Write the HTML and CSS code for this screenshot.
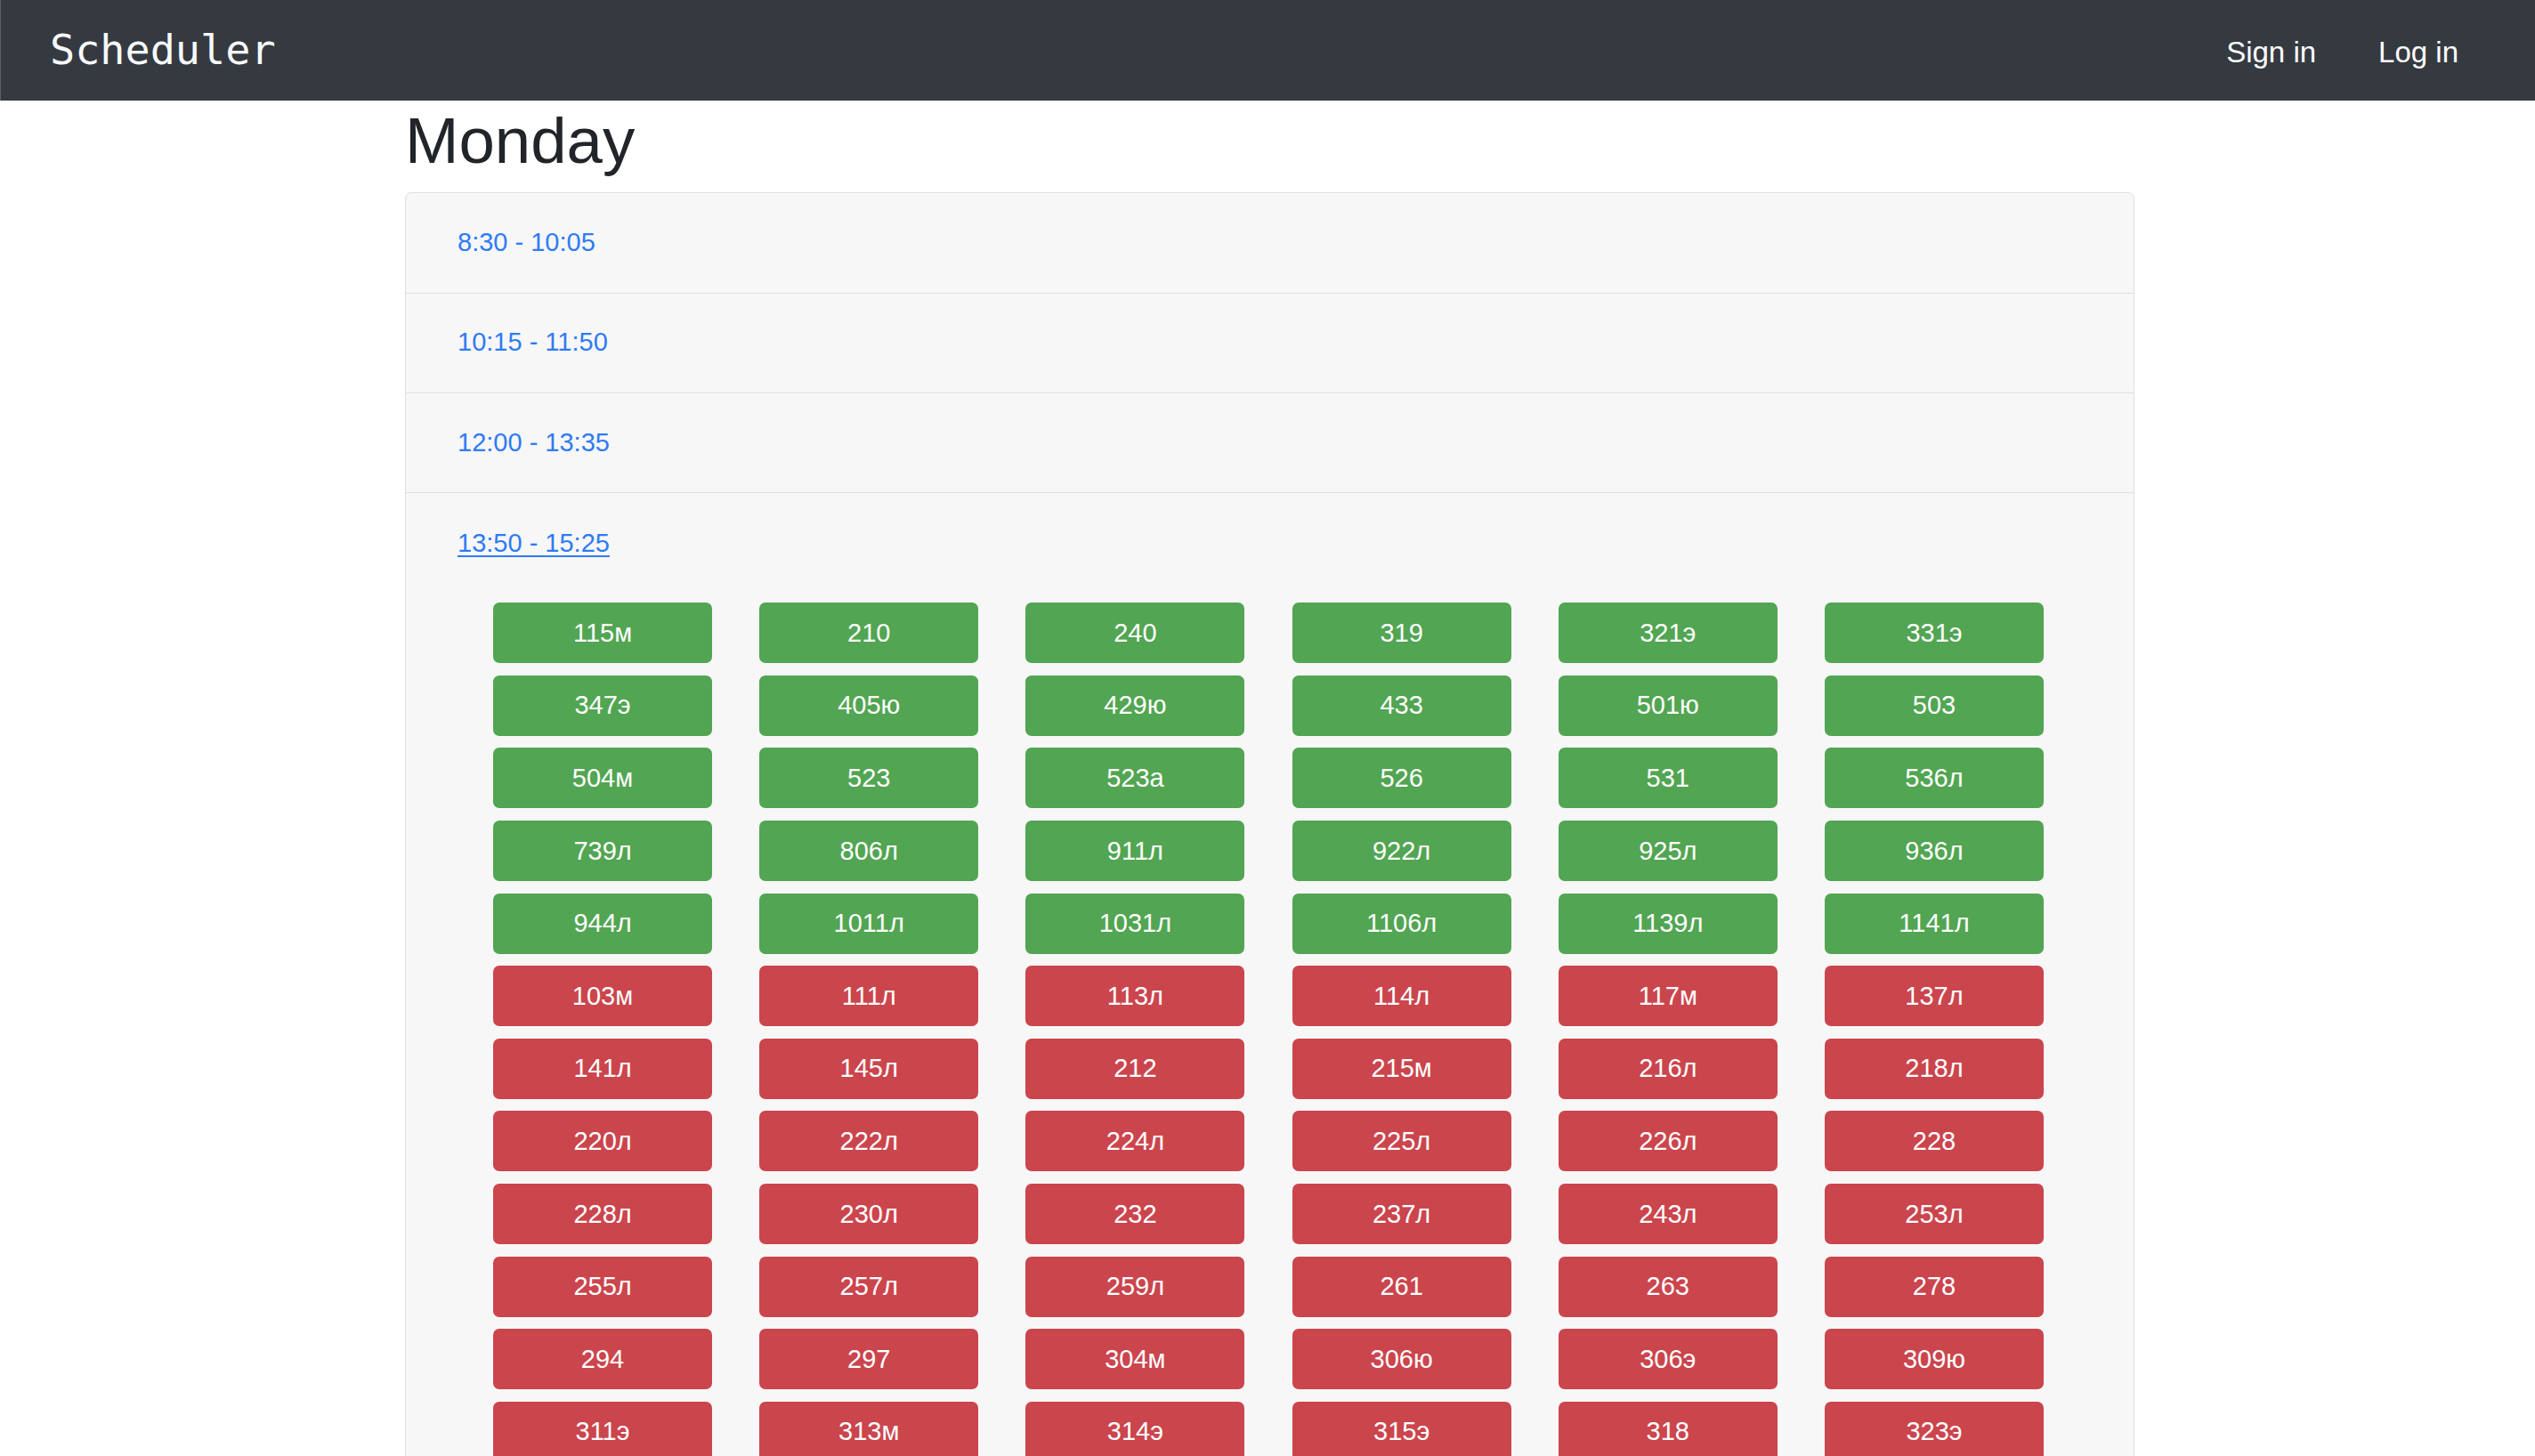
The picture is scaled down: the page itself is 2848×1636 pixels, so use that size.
FILE: index.html
```html
<!DOCTYPE html>
<html lang="en">
<head>
<meta charset="utf-8">
<title>Scheduler</title>
<link rel="stylesheet" href="styles.css">
</head>
<body>
<nav class="navbar">
  <a class="brand" href="#">Scheduler</a>
  <div class="nav-links">
    <a class="nav-link" href="#">Sign in</a>
    <a class="nav-link" href="#">Log in</a>
  </div>
</nav>
<main class="container">
  <h1 class="day-title">Monday</h1>
  <div class="accordion">
    <div class="slot-header"><a class="slot-link" href="#">8:30 - 10:05</a></div>
    <div class="slot-header"><a class="slot-link" href="#">10:15 - 11:50</a></div>
    <div class="slot-header"><a class="slot-link" href="#">12:00 - 13:35</a></div>
    <div class="slot-header open"><a class="slot-link active" href="#">13:50 - 15:25</a></div>
    <div class="slot-body">
      <div class="room-grid">
        <a class="room free" href="#">115м</a><a class="room free" href="#">210</a><a class="room free" href="#">240</a><a class="room free" href="#">319</a><a class="room free" href="#">321э</a><a class="room free" href="#">331э</a>
        <a class="room free" href="#">347э</a><a class="room free" href="#">405ю</a><a class="room free" href="#">429ю</a><a class="room free" href="#">433</a><a class="room free" href="#">501ю</a><a class="room free" href="#">503</a>
        <a class="room free" href="#">504м</a><a class="room free" href="#">523</a><a class="room free" href="#">523а</a><a class="room free" href="#">526</a><a class="room free" href="#">531</a><a class="room free" href="#">536л</a>
        <a class="room free" href="#">739л</a><a class="room free" href="#">806л</a><a class="room free" href="#">911л</a><a class="room free" href="#">922л</a><a class="room free" href="#">925л</a><a class="room free" href="#">936л</a>
        <a class="room free" href="#">944л</a><a class="room free" href="#">1011л</a><a class="room free" href="#">1031л</a><a class="room free" href="#">1106л</a><a class="room free" href="#">1139л</a><a class="room free" href="#">1141л</a>
        <a class="room busy" href="#">103м</a><a class="room busy" href="#">111л</a><a class="room busy" href="#">113л</a><a class="room busy" href="#">114л</a><a class="room busy" href="#">117м</a><a class="room busy" href="#">137л</a>
        <a class="room busy" href="#">141л</a><a class="room busy" href="#">145л</a><a class="room busy" href="#">212</a><a class="room busy" href="#">215м</a><a class="room busy" href="#">216л</a><a class="room busy" href="#">218л</a>
        <a class="room busy" href="#">220л</a><a class="room busy" href="#">222л</a><a class="room busy" href="#">224л</a><a class="room busy" href="#">225л</a><a class="room busy" href="#">226л</a><a class="room busy" href="#">228</a>
        <a class="room busy" href="#">228л</a><a class="room busy" href="#">230л</a><a class="room busy" href="#">232</a><a class="room busy" href="#">237л</a><a class="room busy" href="#">243л</a><a class="room busy" href="#">253л</a>
        <a class="room busy" href="#">255л</a><a class="room busy" href="#">257л</a><a class="room busy" href="#">259л</a><a class="room busy" href="#">261</a><a class="room busy" href="#">263</a><a class="room busy" href="#">278</a>
        <a class="room busy" href="#">294</a><a class="room busy" href="#">297</a><a class="room busy" href="#">304м</a><a class="room busy" href="#">306ю</a><a class="room busy" href="#">306э</a><a class="room busy" href="#">309ю</a>
        <a class="room busy" href="#">311э</a><a class="room busy" href="#">313м</a><a class="room busy" href="#">314э</a><a class="room busy" href="#">315э</a><a class="room busy" href="#">318</a><a class="room busy" href="#">323э</a>
      </div>
    </div>
  </div>
</main>
</body>
</html>
```

FILE: styles.css
```css
* {
  box-sizing: border-box;
}

html, body {
  margin: 0;
  padding: 0;
  background: #ffffff;
}

body {
  font-family: "Liberation Sans", Arial, sans-serif;
  color: #212529;
}

a {
  text-decoration: none;
}

.navbar {
  height: 113px;
  background: #353a41;
  border-left: 1px solid #5b5f66;
  display: flex;
  align-items: center;
  justify-content: space-between;
  padding: 0 86px 0 55px;
}

.brand {
  font-family: "DejaVu Sans Mono", "Liberation Mono", monospace;
  font-size: 46.8px;
  line-height: 1;
  color: #f8f9fa;
}

.nav-links {
  display: flex;
  gap: 70px;
  margin-top: 4px;
}

.nav-link {
  font-size: 33px;
  line-height: 1;
  color: #ffffff;
}

.container {
  width: 1943px;
  margin-left: 455px;
}

.day-title {
  margin: 1px 0 15px;
  font-size: 72.6px;
  line-height: 1.2;
  font-weight: 500;
  color: #212529;
}

.accordion {
  background: #f7f7f7;
  border: 1px solid #dfdfdf;
  border-radius: 7px;
  overflow: hidden;
}

.slot-header {
  height: 112.4px;
  display: flex;
  align-items: center;
  padding-left: 58px;
  border-bottom: 1px solid #dfdfdf;
}

.slot-header.open {
  border-bottom: none;
  height: 112px;
}

.slot-link {
  font-size: 29px;
  line-height: 1.5;
  color: #2f7bf5;
}

.slot-link.active {
  text-decoration: underline;
  text-decoration-thickness: 2px;
  text-underline-offset: 4px;
}

.slot-body {
  padding: 11px 3px 40px 0;
}

.room-grid {
  display: grid;
  grid-template-columns: repeat(6, 246px);
  column-gap: 53.2px;
  row-gap: 13.6px;
  justify-content: center;
}

.room {
  height: 68px;
  border-radius: 7px;
  display: flex;
  align-items: center;
  justify-content: center;
  font-size: 29px;
  color: #ffffff;
}

.room.free {
  background: #52a552;
}

.room.busy {
  background: #cb454d;
}
```
